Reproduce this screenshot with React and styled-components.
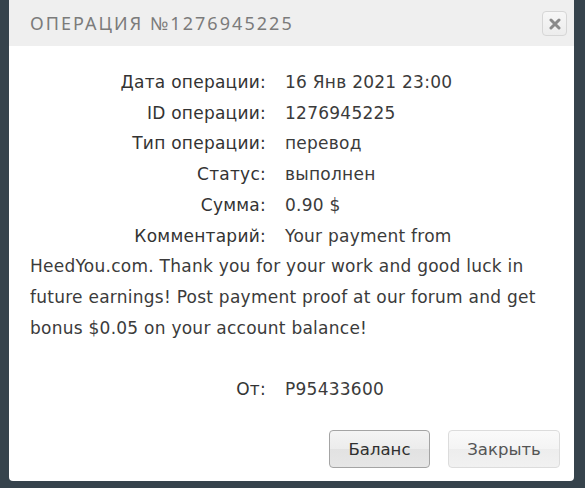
import styled, { createGlobalStyle } from "styled-components";

const GlobalStyle = createGlobalStyle`
  html, body {
    margin: 0;
    padding: 0;
    background: #36434c;
  }
  body {
    font-family: "DejaVu Sans", "Noto Sans", sans-serif;
  }
`;

const Screen = styled.div`
  width: 585px;
  height: 488px;
  padding: 0 11px 7px 9px;
  box-sizing: border-box;
  display: flex;
  flex-direction: column;
`;

const Dialog = styled.div`
  flex: 1;
  background: #fff;
  border-radius: 0 0 4px 4px;
  display: flex;
  flex-direction: column;
  overflow: hidden;
`;

const Header = styled.div`
  height: 46px;
  background: #efefef;
  display: flex;
  align-items: center;
  justify-content: space-between;
  padding: 0 7px 0 21px;
`;

const Title = styled.h2`
  margin: 0;
  font-family: "Noto Sans", sans-serif;
  font-weight: 400;
  font-size: 18px;
  letter-spacing: 2.05px;
  color: #7b7b7b;
  text-transform: uppercase;
`;

const CloseIcon = styled.button`
  width: 25px;
  height: 25px;
  padding: 0;
  border: 1px solid #d6d6d6;
  border-radius: 4px;
  background: linear-gradient(#f7f7f7, #ececec);
  display: flex;
  align-items: center;
  justify-content: center;
  margin-top: 1px;
`;

const Body = styled.div`
  flex: 1;
  padding: 21px 21px 0 21px;
  font-size: 17px;
  letter-spacing: 0.25px;
  line-height: 30.7px;
  color: #3b3b3b;
`;

const Row = styled.div`
  margin-top: ${(p) => (p.$gap ? "30.7px" : "0")};
`;

const Label = styled.span`
  display: inline-block;
  width: 236px;
  margin-right: 19px;
  text-align: right;
  color: #333;
`;

const Footer = styled.div`
  display: flex;
  justify-content: flex-end;
  gap: 18px;
  padding: 0 14px 13px 0;
`;

const Button = styled.button`
  height: 38px;
  padding: 0;
  width: ${(p) => p.$w}px;
  font-family: "DejaVu Sans", sans-serif;
  font-size: 16.5px;
  border-radius: 4px;
  border: 1px solid ${(p) => (p.$primary ? "#a4a4a4" : "#dcdcdc")};
  color: ${(p) => (p.$primary ? "#2f2f2f" : "#555")};
  background: ${(p) =>
    p.$primary
      ? "linear-gradient(#f4f4f4 0%, #ececec 50%, #e2e2e2 51%, #e6e6e6 100%)"
      : "linear-gradient(#fafafa 0%, #f4f4f4 50%, #ededed 51%, #f1f1f1 100%)"};
`;

const rows = [
  ["Дата операции:", "16 Янв 2021 23:00"],
  ["ID операции:", "1276945225"],
  ["Тип операции:", "перевод"],
  ["Статус:", "выполнен"],
  ["Сумма:", "0.90 $"],
];

export default function App() {
  return (
    <>
      <GlobalStyle />
      <Screen>
        <Dialog>
          <Header>
            <Title>Операция №1276945225</Title>
            <CloseIcon aria-label="close">
              <svg width="12" height="12" viewBox="0 0 12 12">
                <path
                  d="M2 2 L10 10 M10 2 L2 10"
                  stroke="#8a8a8a"
                  strokeWidth="3"
                  strokeLinecap="round"
                />
              </svg>
            </CloseIcon>
          </Header>
          <Body>
            {rows.map(([label, value]) => (
              <Row key={label}>
                <Label>{label}</Label>
                {value}
              </Row>
            ))}
            <Row>
              <Label>Комментарий:</Label>
              Your payment from HeedYou.com. Thank you for your work and good
              luck in future earnings! Post payment proof at our forum and get
              bonus $0.05 on your account balance!
            </Row>
            <Row $gap>
              <Label>От:</Label>
              P95433600
            </Row>
          </Body>
          <Footer>
            <Button $primary $w={101}>
              Баланс
            </Button>
            <Button $w={112}>Закрыть</Button>
          </Footer>
        </Dialog>
      </Screen>
    </>
  );
}
